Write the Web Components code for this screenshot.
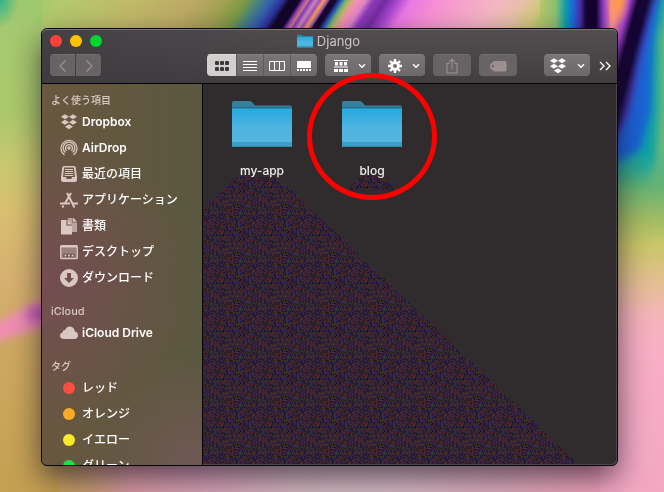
<!DOCTYPE html>
<html lang="ja">
<head>
<meta charset="utf-8">
<title>Django</title>
<style>
  html, body { margin: 0; height: 100%; }
  body {
    font-family: Inter, "Noto Sans CJK JP", sans-serif;
    font-size: 12px; line-height: 16px; color: #fff;
    display: flex; box-sizing: border-box; padding: 28px 46px 26px 41px; overflow: hidden;
  }
</style>
</head>
<body>
<desk-wallpaper></desk-wallpaper>
<finder-window>
  <ui-icon slot="title" name="folder" style="--w:16px;--h:14px"></ui-icon>
  <span slot="title">Django</span>

  <tool-group slot="nav" gap>
    <tool-button label="戻る" icon="back" w="25" dim></tool-button>
    <tool-button label="進む" icon="forward" w="25" dim></tool-button>
  </tool-group>

  <tool-group slot="tools">
    <tool-button label="アイコン" icon="grid" w="29" active></tool-button>
    <tool-button label="リスト" icon="list" w="27"></tool-button>
    <tool-button label="カラム" icon="columns" w="27"></tool-button>
    <tool-button label="ギャラリー" icon="gallery" w="27"></tool-button>
  </tool-group>
  <tool-group slot="tools"><tool-button label="グループ" icon="arrange" w="46" menu></tool-button></tool-group>
  <tool-group slot="tools"><tool-button label="アクション" icon="gear" w="46" menu></tool-button></tool-group>
  <tool-group slot="tools"><tool-button label="共有" icon="share" w="38" dim></tool-button></tool-group>
  <tool-group slot="tools"><tool-button label="タグを編集" icon="tag" w="38" dim></tool-button></tool-group>
  <tool-group slot="extra"><tool-button label="Dropbox" icon="dropbox" w="46" menu></tool-button></tool-group>
  <tool-button slot="extra" label="その他" icon="more" w="12" plain></tool-button>

  <side-group slot="sidebar" heading="よく使う項目">
    <side-item icon="dropbox" latin>Dropbox</side-item>
    <side-item icon="airdrop" latin>AirDrop</side-item>
    <side-item icon="recent">最近の項目</side-item>
    <side-item icon="apps">アプリケーション</side-item>
    <side-item icon="docs">書類</side-item>
    <side-item icon="desktop">デスクトップ</side-item>
    <side-item icon="download">ダウンロード</side-item>
  </side-group>
  <side-group slot="sidebar" heading="iCloud" latin>
    <side-item icon="cloud" latin>iCloud Drive</side-item>
  </side-group>
  <side-group slot="sidebar" heading="タグ">
    <side-item dot="#fb4f45">レッド</side-item>
    <side-item dot="#fcac24">オレンジ</side-item>
    <side-item dot="#fde92b">イエロー</side-item>
    <side-item dot="#1fe046">グリーン</side-item>
  </side-group>

  <folder-item>my-app</folder-item>
  <folder-item marked>blog</folder-item>
</finder-window>

<script>
const ICONS = {
  folder: ['0 0 60 48', `<defs><linearGradient id="f" x2="0" y2="1"><stop offset="0" stop-color="#25a9df"/><stop offset=".5" stop-color="#4fb4e0"/><stop offset="1" stop-color="#55b6de"/></linearGradient></defs>
    <path fill="#36809f" d="M0 3Q0 1 2 1H17Q19 1 20 2L23 5.500H58Q60 5.500 60 7.500V20H0Z"/><path fill="#256d8c" d="M0 7H60V8.500H0Z"/>
    <path fill="url(#f)" d="M0 8.500H60V46Q60 47 59 47H1Q0 47 0 46Z"/><path fill="#3e9fc6" d="M0 42H60V46Q60 47 59 47H1Q0 47 0 46Z"/><path fill="#2c87ab" d="M1 46H59V47H1Z"/>`],
  back: ['0 0 16 16', '<path d="M10.500 2.500 5 8l5.500 5.500" fill="none" stroke="currentColor" stroke-width="1.300"/>'],
  forward: ['0 0 16 16', '<path d="M5.500 2.500 11 8l-5.500 5.500" fill="none" stroke="currentColor" stroke-width="1.300"/>'],
  grid: ['0 0 16 12', '<g fill="currentColor"><rect x="1" y="1" width="4" height="4" rx="1"/><rect x="6" y="1" width="4" height="4" rx="1"/><rect x="11" y="1" width="4" height="4" rx="1"/><rect x="1" y="7" width="4" height="4" rx="1"/><rect x="6" y="7" width="4" height="4" rx="1"/><rect x="11" y="7" width="4" height="4" rx="1"/></g>'],
  list: ['0 0 16 12', '<path d="M1 1.500H15M1 4.500H15M1 7.500H15M1 10.500H15" stroke="currentColor"/>'],
  columns: ['0 0 16 12', '<path d="M.5 1.500H15.500V10.500H.5ZM5.500 1V11M10.500 1V11" fill="none" stroke="currentColor"/>'],
  gallery: ['0 0 16 12', '<path fill="currentColor" d="M1 2Q1 1 2 1H14Q15 1 15 2V8H1ZM1 9H3V11H1ZM4 9H6V11H4ZM7 9H9V11H7ZM10 9H12V11H10ZM13 9H15V11H13Z"/>'],
  arrange: ['0 0 14 14', '<path fill="currentColor" d="M0 1H14V2H0ZM0 7.500H14V8.500H0ZM1 3H4V6.500H1ZM5.500 3H8.500V6.500H5.500ZM10 3H13V6.500H10ZM0 10H4V13H0ZM5 10H9V13H5ZM10 10H14V13H10Z"/>'],
  gear: ['0 0 14 14', '<circle cx="7" cy="7" r="3.400" fill="none" stroke="currentColor" stroke-width="2.800"/><g stroke="currentColor" stroke-width="2.400"><path d="M7 0V3M7 11V14M0 7H3M11 7H14M2 2 4 4M10 10 12 12M12 2 10 4M4 10 2 12"/></g>'],
  share: ['0 0 14 16', '<path d="M4.500 5.500H2V15H12V5.500H9.500M7 11V1.500M4 4.200 7 1.200 10 4.200" fill="none" stroke="currentColor" stroke-width="1.100"/>'],
  tag: ['0 0 18 12', '<path fill="currentColor" fill-rule="evenodd" d="M5 1H16Q17.500 1 17.500 2.500V10Q17.500 11.500 16 11.500H5L1.500 8.500Q0 6.200 1.500 4ZM4 5A1.200 1.200 0 1 0 4 7.400 1.200 1.200 0 1 0 4 5Z"/>'],
  dropbox: ['0 0 18 16', '<path fill="currentColor" d="M5 .3 9 2.800 5 5.300 1 2.800ZM13 .3 17 2.800 13 5.300 9 2.800ZM5 5.700 9 8.200 5 10.700 1 8.200ZM13 5.700 17 8.200 13 10.700 9 8.200ZM9 10.300 13 12.800 9 15.300 5 12.800Z"/>'],
  more: ['0 0 12 10', '<path d="M1 1 5 5 1 9M7 1 11 5 7 9" fill="none" stroke="currentColor" stroke-width="1.400"/>'],
  chevron: ['0 0 8 6', '<path d="M1 1.200 4 4.200 7 1.200" fill="none" stroke="currentColor" stroke-width="1.500"/>'],
  airdrop: ['0 0 18 18', '<g fill="none" stroke="currentColor" stroke-width="1.300"><path d="M4.500 16A8 8 0 1 1 13.500 16"/><path d="M5.400 13.500A5.800 5.800 0 1 1 12.600 13.500"/><path d="M6.600 11.700A3.500 3.500 0 1 1 11.400 11.700"/></g><circle cx="9" cy="9" r="1.700" fill="currentColor"/>'],
  recent: ['0 0 18 18', '<path fill="currentColor" fill-rule="evenodd" d="M4 1H14Q15.500 1 15.700 2.500L17 12V15Q17 17 15 17H3Q1 17 1 15V12L2.300 2.500Q2.500 1 4 1ZM4.200 2.500 3 12H6Q6 14 7.500 14H10.500Q12 14 12 12H15L13.800 2.500Z"/><path d="M5 4.500H13M5 6.500H13M4.600 8.500H13.400M4.600 10.500H13.400" stroke="currentColor"/>'],
  apps: ['0 0 18 18', '<g stroke="currentColor" fill="none"><path stroke-width="2" d="M7 2 14.500 16.500M11 2 5 12.500M3.400 14.500 2.500 16.500"/><path stroke-width="2" d="M0 12.500H10M13 12.500H18"/></g>'],
  docs: ['0 0 18 18', '<path fill="currentColor" opacity=".7" d="M8 1H12.500V5.500H17V15H12V8L7.500 3.500Z"/><path fill="currentColor" d="M13 .5 17 4.800H13ZM1 3H6.500V8.500H12V17.500H1ZM7.500 3 12 7.500H7.500Z"/>'],
  desktop: ['0 0 18 18', '<rect x=".7" y="2.700" width="16.600" height="13" rx="1" fill="currentColor" fill-opacity=".4" stroke="currentColor" stroke-width="1.300"/><path fill="currentColor" d="M1 2H17V4.500H1Z"/><path d="M3.500 10.800H14.500V14H3.500Z" fill="#5f4a45"/><path fill="currentColor" d="M4.500 11.500H6.500V13.500H4.500ZM8 11.500H10V13.500H8ZM11.500 11.500H13.500V13.500H11.500Z"/>'],
  download: ['0 0 18 18', '<path fill="currentColor" fill-rule="evenodd" d="M9 0A9 9 0 1 0 9 18 9 9 0 1 0 9 0ZM7 4H11V9H14L9 14 4 9H7Z"/>'],
  cloud: ['0 0 18 18', '<path fill="currentColor" d="M3.800 15Q0 14.800 0 11.600 0 9 2.600 8.300 2.700 5.700 5.200 5.900 6.500 2.500 10 2.500 14.300 2.800 14.800 7.600 18 8.300 18 11.400 17.800 14.800 14.300 15Z"/>'],
};

class UiIcon extends HTMLElement {
  connectedCallback() {
    const [box, art] = ICONS[this.getAttribute('name')];
    this.attachShadow({ mode: 'open' }).innerHTML = `
      <style>:host{display:inline-block;width:var(--w,18px);height:var(--h,18px);flex:none}
      svg{display:block;width:100%;height:100%}</style>
      <svg viewBox="${box}" aria-hidden="true">${art}</svg>`;
  }
}

class ToolGroup extends HTMLElement {
  connectedCallback() {
    this.attachShadow({ mode: 'open' }).innerHTML = `
      <style>:host{display:flex;height:22px;border-radius:4px;overflow:hidden;gap:0;flex:none}
      :host([gap]){gap:1px;border-radius:4px}</style><slot></slot>`;
  }
}

const SIZES = { back: [16,16], forward: [16,16], grid: [16,12], list: [16,12], columns: [16,12], gallery: [16,12], arrange: [14,14], gear: [14,14], share: [14,16], tag: [18,12], dropbox: [18,16], more: [12,10] };
class ToolButton extends HTMLElement {
  connectedCallback() {
    const icon = this.getAttribute('icon'), [w, h] = SIZES[icon];
    const menu = this.hasAttribute('menu');
    this.attachShadow({ mode: 'open' }).innerHTML = `
      <style>
        :host{display:block;flex:none;width:${this.getAttribute('w')}px}
        button{all:unset;box-sizing:border-box;width:100%;height:22px;display:flex;align-items:center;justify-content:center;
          color:#fff;background:linear-gradient(#797475,#6d6869);border-top:1px solid #857c7d}
        :host(:not(:first-child):not([active]):not([dim]):not([plain])) button{border-left:1px solid #5e595b}
        :host([active]) button{color:#3b3839;background:#d3cfce;border-color:#dedad9}
        :host([dim]) button{color:#9d8f8f;background:#686465;border-color:#756d6e}
        :host([plain]) button{background:none;border-color:transparent}
        button.menu{justify-content:space-between;padding:0 5px 0 ${icon === 'dropbox' ? 5 : 9}px}
      </style>
      <button type="button" class="${menu ? 'menu' : ''}" aria-label="${this.getAttribute('label')}" ${menu ? 'aria-haspopup="menu"' : ''} ${this.hasAttribute('active') ? 'aria-pressed="true"' : ''}>
        <ui-icon name="${icon}" style="--w:${w}px;--h:${h}px"></ui-icon>
        ${menu ? '<ui-icon name="chevron" style="--w:8px;--h:6px"></ui-icon>' : ''}
      </button>`;
  }
}

class SideGroup extends HTMLElement {
  connectedCallback() {
    this.attachShadow({ mode: 'open' }).innerHTML = `
      <style>:host{display:block}
      h2{margin:0 0 0 9px;font-size:10px;line-height:18px;font-weight:500;color:#d9c9c2}
      :host([latin]) h2{font-size:11px}</style>
      <h2>${this.getAttribute('heading')}</h2><div role="list"><slot></slot></div>`;
  }
}

class SideItem extends HTMLElement {
  connectedCallback() {
    const dot = this.getAttribute('dot');
    this.setAttribute('role', 'listitem');
    this.attachShadow({ mode: 'open' }).innerHTML = `
      <style>:host{display:block}
      a{display:flex;align-items:center;gap:4px;height:26px;padding-left:18px;color:#fff;text-decoration:none;font-weight:500;white-space:nowrap}
      :host([latin]) a{font-weight:600}
      ui-icon{color:#dbc7c1}
      i{width:12px;height:12px;margin:0 3px;border-radius:50%;background:${dot || 'none'}}</style>
      <a href="#">${dot ? '<i></i>' : `<ui-icon name="${this.getAttribute('icon')}"${this.getAttribute('icon') === 'dropbox' ? ' style="--h:16px"' : ''}></ui-icon>`}<span><slot></slot></span></a>`;
  }
}

class FolderItem extends HTMLElement {
  connectedCallback() {
    this.attachShadow({ mode: 'open' }).innerHTML = `
      <style>:host{display:block;position:relative}
      a{display:flex;flex-direction:column;align-items:center;gap:15px;padding:16px 0 7px;color:#f4efef;text-decoration:none;font-weight:500}
      .ring{position:absolute;inset:-11px -10px -14px;border:5px solid #fe0000;border-radius:50%;pointer-events:none}</style>
      <a href="#"><ui-icon name="folder" style="--w:60px;--h:48px"></ui-icon><span><slot></slot></span></a>
      ${this.hasAttribute('marked') ? '<div class="ring"></div>' : ''}`;
  }
}

/* Pixel noise tile: one path per colour, seeded so that every load draws the same grain. */
function grainTile(size) {
  const paths = { '#1d1150': '', '#521f2c': '', '#161219': '', '#3c3338': '' };
  const colours = Object.keys(paths);
  let seed = 7;
  const next = () => (seed = (seed * 1103515245 + 12345) % 2147483648) / 2147483648;
  for (let y = 0; y < size; y++) {
    for (let x = 0; x < size; x++) {
      if ((x + y) % 2 && next() < .75) continue;
      const r = next();
      const c = r < .3 ? 0 : r < .6 ? 1 : r < .68 ? 2 : r < .8 ? 3 : -1;
      if (c >= 0) paths[colours[c]] += `M${x} ${y}h1v1h-1z`;
    }
  }
  return colours.map((c) => `<path fill="${c}" d="${paths[c]}"/>`).join('');
}

class FinderWindow extends HTMLElement {
  connectedCallback() {
    this.attachShadow({ mode: 'open' }).innerHTML = `
      <style>
        :host{position:relative;flex:1;min-width:0;display:flex;flex-direction:column;border:1px solid #080608;border-radius:6px;
          background:#302c2d;box-shadow:0 12px 30px rgba(20,10,30,.65)}
        header{border-bottom:1px solid #050405;border-radius:5px 5px 0 0;box-shadow:inset 0 1px #7b7577;
          background:linear-gradient(90deg,rgba(58,57,62,.6),rgba(58,57,62,0) 55%),linear-gradient(#534d4f,#423e40)}
        .bar{display:grid;grid-template-columns:1fr auto 1fr;align-items:center;height:23px;padding:0 10px 0 8px}
        .lights{display:flex;gap:8px}
        .lights button{all:unset;width:12px;height:12px;border-radius:50%}
        .title{display:flex;align-items:center;gap:4px;font-size:13px;color:#cdc3c4}
        .tools{display:flex;align-items:center;padding:2px 6px 7px 8px}
        .set{display:flex;align-items:center;gap:8px}
        .wide{flex:1}.narrow{flex:0 0 27px}
        .set.end{gap:9px}
        main{flex:1;min-height:0;display:flex}
        nav{flex:none;width:160px;border-right:1px solid #050405;border-radius:0 0 0 5px;overflow:hidden;
          display:flex;flex-direction:column;gap:11px;
          background:radial-gradient(circle at 0 52%,rgba(120,74,88,.75),rgba(120,74,88,0) 150px),
            radial-gradient(circle at 100% 100%,rgba(118,88,90,.8),rgba(118,88,90,0) 110px),
            linear-gradient(90deg,#695740,#5a583f)}
        nav::before{content:"";flex:none;height:0;margin-top:-5px}
        ::slotted(side-group){flex:none}
        ::slotted(side-group:first-of-type){padding-top:1px}
        .files{position:relative;flex:1;min-width:0;display:grid;grid-template-columns:repeat(auto-fill,110px);align-content:start;padding-left:4px;border-radius:0 0 5px 0;box-shadow:inset -1px -1px #4c4748}
        .grain{position:absolute;inset:0;width:100%;height:100%}
      </style>
      <header>
        <div class="bar">
          <div class="lights">
            <button aria-label="閉じる" style="background:#fe4139"></button>
            <button aria-label="しまう" style="background:#fec300"></button>
            <button aria-label="拡大" style="background:#00d62d"></button>
          </div>
          <div class="title"><slot name="title"></slot></div>
        </div>
        <div class="tools">
          <slot name="nav"></slot><span class="wide"></span>
          <div class="set"><slot name="tools"></slot></div><span class="narrow"></span>
          <div class="set end"><slot name="extra"></slot></div>
        </div>
      </header>
      <main>
        <nav><slot name="sidebar"></slot></nav>
        <div class="files">
          <svg class="grain" viewBox="0 0 414 381" preserveAspectRatio="none" aria-hidden="true" shape-rendering="crispEdges">
            <defs><pattern id="p" width="48" height="48" patternUnits="userSpaceOnUse">
              <rect width="48" height="48" fill="#302a2c"/>${grainTile(48)}
            </pattern></defs>
            <path fill="url(#p)" d="M0 124 34 93H70L88 106 375 380H0ZM144 106 158 92H178L194 106Z"/>
          </svg>
          <slot></slot>
        </div>
      </main>`;
  }
}

class DeskWallpaper extends HTMLElement {
  connectedCallback() {
    const stops = (list) => list.map(([o, c]) => `<stop offset="${o}" stop-color="${c}"/>`).join('');
    const px = (list) => stops(list.map(([x, c]) => [x / 664, c]));
    const py = (list) => stops(list.map(([y, c]) => [y / 492, c]));
    this.attachShadow({ mode: 'open' }).innerHTML = `
      <style>:host{display:block;position:fixed;inset:0}svg{display:block;width:100%;height:100%}</style>
      <svg viewBox="0 0 664 492" preserveAspectRatio="none" aria-hidden="true">
        <defs>
          <linearGradient id="bottom" gradientUnits="userSpaceOnUse" x1="0" y1="0" x2="664" y2="0">${px([[0,'#c6a154'],[40,'#c6a154'],[85,'#c9a070'],[130,'#dc9da5'],[200,'#dba6b8'],[300,'#d8bcc2'],[390,'#dabec6'],[500,'#e2b0be'],[600,'#f2a3ba'],[664,'#f5a9c2']])}</linearGradient>
          <linearGradient id="left" gradientUnits="userSpaceOnUse" x1="0" y1="0" x2="0" y2="492">${py([[0,'#9cc870'],[30,'#a6c970'],[110,'#aac86c'],[160,'#c6c870'],[210,'#d9bf70'],[280,'#d6b070'],[350,'#cda860'],[492,'#c5a052']])}</linearGradient>
          <linearGradient id="right" gradientUnits="userSpaceOnUse" x1="0" y1="0" x2="0" y2="492">${py([[0,'#58b480'],[150,'#3eac8c'],[185,'#62b274'],[220,'#a3bc64'],[245,'#c9c668'],[275,'#dfc08a'],[315,'#f4b5b8'],[350,'#f8aec5'],[492,'#f3a8c2']])}</linearGradient>
          <linearGradient id="top" gradientUnits="userSpaceOnUse" x1="0" y1="0" x2="664" y2="0" gradientTransform="translate(10 0) skewX(-33)">${px([[0,'#93c873'],[50,'#b2ca6c'],[130,'#c1b868'],[185,'#bba964'],[215,'#a3a152'],[236,'#7c9a45'],[248,'#4c8578'],[262,'#345fae'],[273,'#2c2f98'],[280,'#120528'],[290,'#120528'],[294,'#8a3aba'],[298,'#d07a78'],[301,'#8a3ac0'],[306,'#c888b4'],[310,'#a050c0'],[314,'#fb9b58'],[318,'#a060a0'],[321,'#180530'],[326,'#180530'],[331,'#2456b8'],[336,'#70b070'],[341,'#c9b070'],[347,'#f391b0'],[356,'#e082c8'],[364,'#8c3cba'],[376,'#752ba0'],[388,'#a848d0'],[402,'#ea78e2'],[430,'#f890d4'],[460,'#f6a6ca'],[490,'#f4b6c2'],[515,'#e8c0a6'],[535,'#d0c878'],[550,'#a9c468'],[664,'#a9c468']])}</linearGradient>
          <linearGradient id="arch" gradientUnits="userSpaceOnUse" x1="0" y1="0" x2="664" y2="0">${px([[540,'#b9c56a'],[556,'#8abf70'],[565,'#12a0a8'],[573,'#1a68d8'],[580,'#4a30a8'],[586,'#150530'],[596,'#120030'],[603,'#8a3ac0'],[612,'#f28aa4'],[664,'#f28aa4']])}</linearGradient>
          <linearGradient id="swirl" gradientUnits="userSpaceOnUse" x1="0" y1="0" x2="664" y2="0" gradientTransform="skewX(-15)">${px([[620,'#f88e90'],[630,'#a040c8'],[638,'#150535'],[648,'#150535'],[657,'#4438b0'],[664,'#1a64d8']])}</linearGradient>
          <radialGradient id="teal"><stop offset="0" stop-color="#30b48c"/><stop offset="1" stop-color="#30b48c" stop-opacity="0"/></radialGradient>
          <radialGradient id="flame"><stop offset="0" stop-color="#ff9c45"/><stop offset="1" stop-color="#ff9c45" stop-opacity="0"/></radialGradient>
          <linearGradient id="fade" x2="0" y2="1"><stop offset=".8" stop-color="#fff"/><stop offset="1" stop-color="#000"/></linearGradient>
          <mask id="m"><rect x="600" width="64" height="188" fill="url(#fade)"/></mask>
          <filter id="s" x="-50%" y="-50%" width="200%" height="200%"><feGaussianBlur stdDeviation="4"/></filter>
        </defs>
        <rect width="664" height="492" fill="url(#bottom)"/>
        <rect width="60" height="492" fill="url(#left)"/>
        <rect x="600" width="64" height="492" fill="url(#right)"/>
        <path fill="#f08cb4" filter="url(#s)" d="M-10 326 20 310 60 292V324L20 334-10 344Z"/>
        <ellipse cx="38" cy="314" rx="12" ry="8" fill="#b848c0" filter="url(#s)" opacity=".6"/>
        <rect x="42" width="508" height="40" fill="url(#top)"/>
        <rect x="540" width="78" height="40" fill="url(#arch)"/>
        <ellipse cx="0" cy="0" rx="18" ry="28" fill="url(#teal)"/>
        <g mask="url(#m)">
          <path fill="url(#swirl)" d="M610 0H664V190H610Z"/>
          <path filter="url(#s)" fill="#1a64d8" d="M656 0 640 60 634 110 610 150V176L640 168 664 100V0Z"/>
          <path filter="url(#s)" fill="#0ca2a6" d="M661 -10 653 50 651 110 641 148 615 168V200H680V-10Z"/>
          <path filter="url(#s)" fill="#6cb878" d="M670 -10 659 40 659 110 655 165 640 200H680V-10Z"/>
        </g>
        <ellipse cx="618" cy="0" rx="12" ry="26" fill="url(#flame)"/>
      </svg>`;
  }
}

customElements.define('ui-icon', UiIcon);
customElements.define('tool-group', ToolGroup);
customElements.define('tool-button', ToolButton);
customElements.define('side-group', SideGroup);
customElements.define('side-item', SideItem);
customElements.define('folder-item', FolderItem);
customElements.define('finder-window', FinderWindow);
customElements.define('desk-wallpaper', DeskWallpaper);
</script>
</body>
</html>
